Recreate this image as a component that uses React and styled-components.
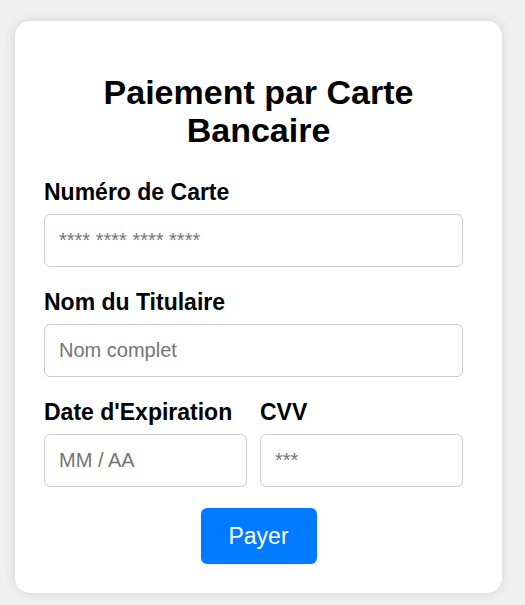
import React from "react";
import styled, { createGlobalStyle } from "styled-components";

const Global = createGlobalStyle`
  html, body { margin: 0; padding: 0; background: #f0f0f0; }
  body { font-family: "Liberation Sans", Arial, sans-serif; }
  * { box-sizing: border-box; }
`;

const Page = styled.div`
  padding: 21px 0 12px 15px;
`;

const Card = styled.div`
  width: 487px;
  background: #fff;
  border-radius: 15px;
  box-shadow: 0 0 12px rgba(0, 0, 0, 0.12);
  padding: 29px;
`;

const Title = styled.h2`
  margin: 23px 0 30px;
  font-size: 34px;
  line-height: 38px;
  font-weight: 700;
  text-align: center;
  color: #000;
`;

const Form = styled.form`
  display: flex;
  flex-direction: column;
  padding-right: 10px;
`;

const Field = styled.div`
  display: flex;
  flex-direction: column;
  flex: 1;
  min-width: 0;
  margin-bottom: ${(p) => p.$mb ?? 22}px;
`;

const Row = styled.div`
  display: flex;
  gap: 13px;
`;

const Label = styled.label`
  font-size: 23px;
  font-weight: 700;
  color: #000;
  margin-bottom: 8px;
`;

const Input = styled.input`
  width: 100%;
  height: 53px;
  padding: 0 14px;
  border: 1px solid #ccc;
  border-radius: 6px;
  font-family: "Liberation Sans", Arial, sans-serif;
  font-size: 20px;
  color: #000;
  outline: none;
  &::placeholder { color: #757575; }
`;

const Button = styled.button`
  align-self: center;
  margin-left: 10px;
  width: 116px;
  height: 56px;
  border: none;
  border-radius: 6px;
  background: #007bff;
  color: #fff;
  font-family: "Liberation Sans", Arial, sans-serif;
  font-size: 23px;
  cursor: pointer;
`;

export default function App() {
  return (
    <>
      <Global />
      <Page>
        <Card>
          <Title>Paiement par Carte Bancaire</Title>
          <Form onSubmit={(e) => e.preventDefault()}>
            <Field>
              <Label>Numéro de Carte</Label>
              <Input placeholder="**** **** **** ****" />
            </Field>
            <Field>
              <Label>Nom du Titulaire</Label>
              <Input placeholder="Nom complet" />
            </Field>
            <Row>
              <Field $mb={21}>
                <Label>Date d'Expiration</Label>
                <Input placeholder="MM / AA" />
              </Field>
              <Field $mb={21}>
                <Label>CVV</Label>
                <Input placeholder="***" />
              </Field>
            </Row>
            <Button type="submit">Payer</Button>
          </Form>
        </Card>
      </Page>
    </>
  );
}
